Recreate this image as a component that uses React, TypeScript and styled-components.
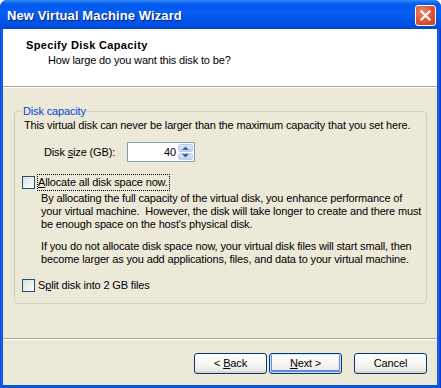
import styled, { createGlobalStyle } from 'styled-components';

const GlobalStyle = createGlobalStyle`
  html, body {
    margin: 0;
    padding: 0;
    background: #ffffff;
  }
  body {
    font-family: "Liberation Sans", Arial, sans-serif;
    font-size: 11px;
    letter-spacing: -0.15px;
    color: #000000;
  }
`;

function ArrowUp() {
  return (
    <svg width="7" height="4" viewBox="0 0 7 4">
      <path d="M0 4 L3.5 0.5 L7 4 Z" fill="#4D6185" />
    </svg>
  );
}

function ArrowDown() {
  return (
    <svg width="7" height="4" viewBox="0 0 7 4">
      <path d="M0 0 L3.5 3.5 L7 0 Z" fill="#4D6185" />
    </svg>
  );
}

function CloseGlyph() {
  return (
    <svg width="11" height="11" viewBox="0 0 11 11">
      <path d="M1.5 1.5 L9.5 9.5 M9.5 1.5 L1.5 9.5" stroke="#ffffff" strokeWidth="2.2" strokeLinecap="square" />
    </svg>
  );
}

export default function App() {
  return (
    <>
      <GlobalStyle />
      <Window>
        <TitleBar>
          <TitleText>New Virtual Machine Wizard</TitleText>
          <CloseButton>
            <CloseGlyph />
          </CloseButton>
        </TitleBar>
        <Client>
          <Header>
            <HeaderTitle>Specify Disk Capacity</HeaderTitle>
            <HeaderSub>How large do you want this disk to be?</HeaderSub>
          </Header>
          <Body>
            <Group>
              <Legend>Disk capacity</Legend>
              <Intro>This virtual disk can never be larger than the maximum capacity that you set here.</Intro>
              <SizeRow>
                <SizeLabel>
                  Disk <u>s</u>ize (GB):
                </SizeLabel>
                <SpinBox>
                  <SpinValue>40</SpinValue>
                  <SpinButtons>
                    <SpinButton>
                      <ArrowUp />
                    </SpinButton>
                    <SpinButton>
                      <ArrowDown />
                    </SpinButton>
                  </SpinButtons>
                </SpinBox>
              </SizeRow>
              <CheckRow $top={12}>
                <CheckBox />
                <CheckLabel $focused>
                  <u>A</u>llocate all disk space now.
                </CheckLabel>
              </CheckRow>
              <Para $top={2}>
                By allocating the full capacity of the virtual disk, you enhance performance of
                <br />
                your virtual machine.&nbsp; However, the disk will take longer to create and there must
                <br />
                be enough space on the host's physical disk.
              </Para>
              <Para $top={9}>
                If you do not allocate disk space now, your virtual disk files will start small, then
                <br />
                become larger as you add applications, files, and data to your virtual machine.
              </Para>
              <CheckRow $top={11}>
                <CheckBox />
                <CheckLabel>
                  S<u>p</u>lit disk into 2 GB files
                </CheckLabel>
              </CheckRow>
            </Group>
          </Body>
          <Footer>
            <WizardButton>
              <span>
                {'< '}
                <u>B</u>ack
              </span>
            </WizardButton>
            <WizardButton $default>
              <span>
                <u>N</u>ext {'>'}
              </span>
            </WizardButton>
            <WizardButton $gap={10}>Cancel</WizardButton>
          </Footer>
        </Client>
      </Window>
    </>
  );
}

const Window = styled.div`
  width: 441px;
  height: 388px;
  display: flex;
  flex-direction: column;
  background: linear-gradient(to right, #0831d9 0px, #166aee 1px, #0855dd 3px, #0855dd 437px, #166aee 438px, #0831d9 441px);
  border-radius: 7px 7px 0 0;
  overflow: hidden;
`;

const TitleBar = styled.div`
  height: 29px;
  flex-shrink: 0;
  display: flex;
  align-items: center;
  justify-content: space-between;
  padding: 0 5px 0 7px;
  box-sizing: border-box;
  background: linear-gradient(
    to bottom,
    #3d8ef7 0px,
    #0a63f0 3px,
    #0058ee 6px,
    #0a5ff4 12px,
    #0055e9 20px,
    #0050e0 25px,
    #0046d3 29px
  );
`;

const TitleText = styled.span`
  font-family: "Liberation Sans", Arial, sans-serif;
  font-weight: bold;
  font-size: 13px;
  letter-spacing: 0.1px;
  color: #ffffff;
  text-shadow: 1px 1px 0 #0a1e8a;
  margin-top: 1px;
`;

const CloseButton = styled.div`
  width: 21px;
  height: 21px;
  box-sizing: border-box;
  border: 1px solid #ffffff;
  border-radius: 3px;
  background: radial-gradient(circle at 35% 30%, #f08a6a 0%, #e15a35 45%, #c7401b 100%);
  display: flex;
  align-items: center;
  justify-content: center;
  margin-top: 1px;
`;

const Client = styled.div`
  flex: 1;
  display: flex;
  flex-direction: column;
  margin: 0 4px 3px 3px;
  background: #ece9d8;
`;

const Header = styled.div`
  height: 57px;
  flex-shrink: 0;
  box-sizing: content-box;
  background: #ffffff;
  border-bottom: 1px solid #aca899;
  padding: 0 0 0 23px;
  display: flex;
  flex-direction: column;
`;

const HeaderTitle = styled.div`
  font-weight: bold;
  letter-spacing: 0.35px;
  line-height: 13px;
  margin-top: 10px;
`;

const HeaderSub = styled.div`
  line-height: 13px;
  margin-top: 2px;
  padding-left: 22px;
`;

const Body = styled.div`
  flex: 1;
  border-top: 1px solid #ffffff;
  padding: 0 10px 0 11px;
  display: flex;
  flex-direction: column;
`;

const Group = styled.fieldset`
  margin: 17px 0 0 0;
  padding: 1px 8px 10px 7px;
  border: 1px solid #d0d0bf;
  border-radius: 4px;
  display: flex;
  flex-direction: column;
  min-width: 0;
`;

const Legend = styled.legend`
  color: #0046d5;
  line-height: 13px;
  padding: 0 1px;
  margin-left: 0;
`;

const Intro = styled.div`
  line-height: 13px;
  padding-left: 2px;
  white-space: nowrap;
`;

const SizeRow = styled.div`
  display: flex;
  align-items: center;
  margin-top: 10px;
  padding-left: 22px;
`;

const SizeLabel = styled.span`
  width: 83px;
  line-height: 13px;
`;

const SpinBox = styled.div`
  width: 68px;
  height: 20px;
  box-sizing: border-box;
  border: 1px solid #7f9db9;
  background: #ffffff;
  display: flex;
  align-items: stretch;
  padding: 1px;
`;

const SpinValue = styled.span`
  flex: 1;
  text-align: right;
  padding-right: 2px;
  line-height: 16px;
`;

const SpinButtons = styled.div`
  width: 15px;
  display: flex;
  flex-direction: column;
  gap: 1px;
`;

const SpinButton = styled.div`
  flex: 1;
  border-radius: 2px;
  border: 1px solid #bccbf2;
  background: linear-gradient(to bottom, #dce6fc, #c1d2f8);
  display: flex;
  align-items: center;
  justify-content: center;
`;

const CheckRow = styled.div<{ $top: number }>`
  display: flex;
  align-items: center;
  gap: 2px;
  height: 16px;
  margin-top: ${({ $top }) => $top}px;
`;

const CheckBox = styled.span`
  width: 13px;
  height: 13px;
  box-sizing: border-box;
  border: 1px solid #1c5180;
  background: linear-gradient(135deg, #dcdcd7 0%, #f4f4f1 70%, #ffffff 100%);
  flex-shrink: 0;
`;

const CheckLabel = styled.span<{ $focused?: boolean }>`
  line-height: 13px;
  padding: 1px 1px 1px 0;
  border: 1px dotted ${({ $focused }) => ($focused ? '#000000' : 'transparent')};
`;

const Para = styled.div<{ $top: number }>`
  line-height: 13px;
  margin-top: ${({ $top }) => $top}px;
  padding-left: 19px;
  white-space: nowrap;
`;

const Footer = styled.div`
  flex-shrink: 0;
  border-top: 1px solid #aca899;
  box-shadow: inset 0 1px 0 #ffffff;
  padding: 14px 10px 11px 0;
  display: flex;
  justify-content: flex-end;
  gap: 2px;
`;

const WizardButton = styled.div<{ $default?: boolean; $gap?: number }>`
  width: 73px;
  height: 21px;
  box-sizing: border-box;
  border: 1px solid #003c74;
  border-radius: 3px;
  margin-left: ${({ $gap }) => $gap ?? 0}px;
  background: linear-gradient(to bottom, #ffffff 0%, #f4f4f0 60%, #ebeae2 85%, #d6d0c5 100%);
  box-shadow: ${({ $default }) =>
    $default ? 'inset 0 0 0 1px #cee7ff, inset 0 -1px 0 2px #6982ee' : 'none'};
  display: flex;
  align-items: center;
  justify-content: center;
  line-height: 13px;
`;
